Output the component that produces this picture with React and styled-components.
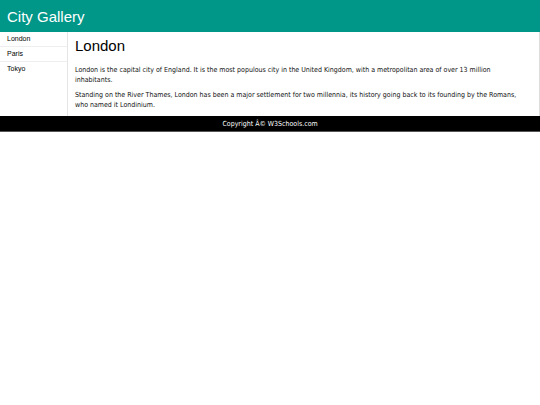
import React from "react";
import styled, { createGlobalStyle } from "styled-components";

const Global = createGlobalStyle`
  html, body { margin: 0; padding: 0; background: #fff; }
  body { font-family: "Liberation Sans", Arial, sans-serif; }
`;

const Header = styled.header`
  background: #009688;
  color: #fff;
  height: 32px;
  padding: 0 7px;
  display: flex;
  align-items: center;
`;

const Title = styled.h1`
  margin: 0;
  font-size: 15px;
  font-weight: normal;
`;

const Body = styled.div`
  display: flex;
`;

const Nav = styled.nav`
  width: 67px;
  border-right: 1px solid #e5e5e5;
  flex: none;
`;

const NavList = styled.ul`
  list-style: none;
  margin: 0;
  padding: 0;
`;

const NavItem = styled.li`
  height: 14px;
  line-height: 14px;
  padding: 0 7px;
  font-size: 7px;
  color: #000;
  border-bottom: ${(p) => (p.$last ? "none" : "1px solid #eee")};
`;

const Article = styled.article`
  flex: 1;
  padding: 0 14px 6px 7px;
  border-right: 1px solid #ddd;
`;

const Heading = styled.h2`
  font-family: "Liberation Sans", Arial, sans-serif;
  font-size: 15px;
  line-height: 17px;
  font-weight: normal;
  margin: 5px 0 11px;
`;

const Para = styled.p`
  font-family: "DejaVu Sans Condensed", "DejaVu Sans", Verdana, sans-serif;
  font-size: 7px;
  line-height: 10px;
  margin: 0 0 5px;
  color: #111;
  &:last-child { margin-bottom: 0; }
`;

const Footer = styled.footer`
  background: #000;
  color: #fff;
  height: 15px;
  border-bottom: 1px solid #555;
  display: flex;
  align-items: center;
  justify-content: center;
  font-family: "DejaVu Sans Condensed", "DejaVu Sans", Verdana, sans-serif;
  font-size: 7px;
`;

export default function App() {
  return (
    <>
      <Global />
      <Header>
        <Title>City Gallery</Title>
      </Header>
      <Body>
        <Nav>
          <NavList>
            <NavItem>London</NavItem>
            <NavItem>Paris</NavItem>
            <NavItem $last>Tokyo</NavItem>
          </NavList>
        </Nav>
        <Article>
          <Heading>London</Heading>
          <Para>
            London is the capital city of England. It is the most populous city in the United Kingdom, with a metropolitan area of over 13 million inhabitants.
          </Para>
          <Para>
            Standing on the River Thames, London has been a major settlement for two millennia, its history going back to its founding by the Romans, who named it Londinium.
          </Para>
        </Article>
      </Body>
      <Footer>Copyright Â© W3Schools.com</Footer>
    </>
  );
}
